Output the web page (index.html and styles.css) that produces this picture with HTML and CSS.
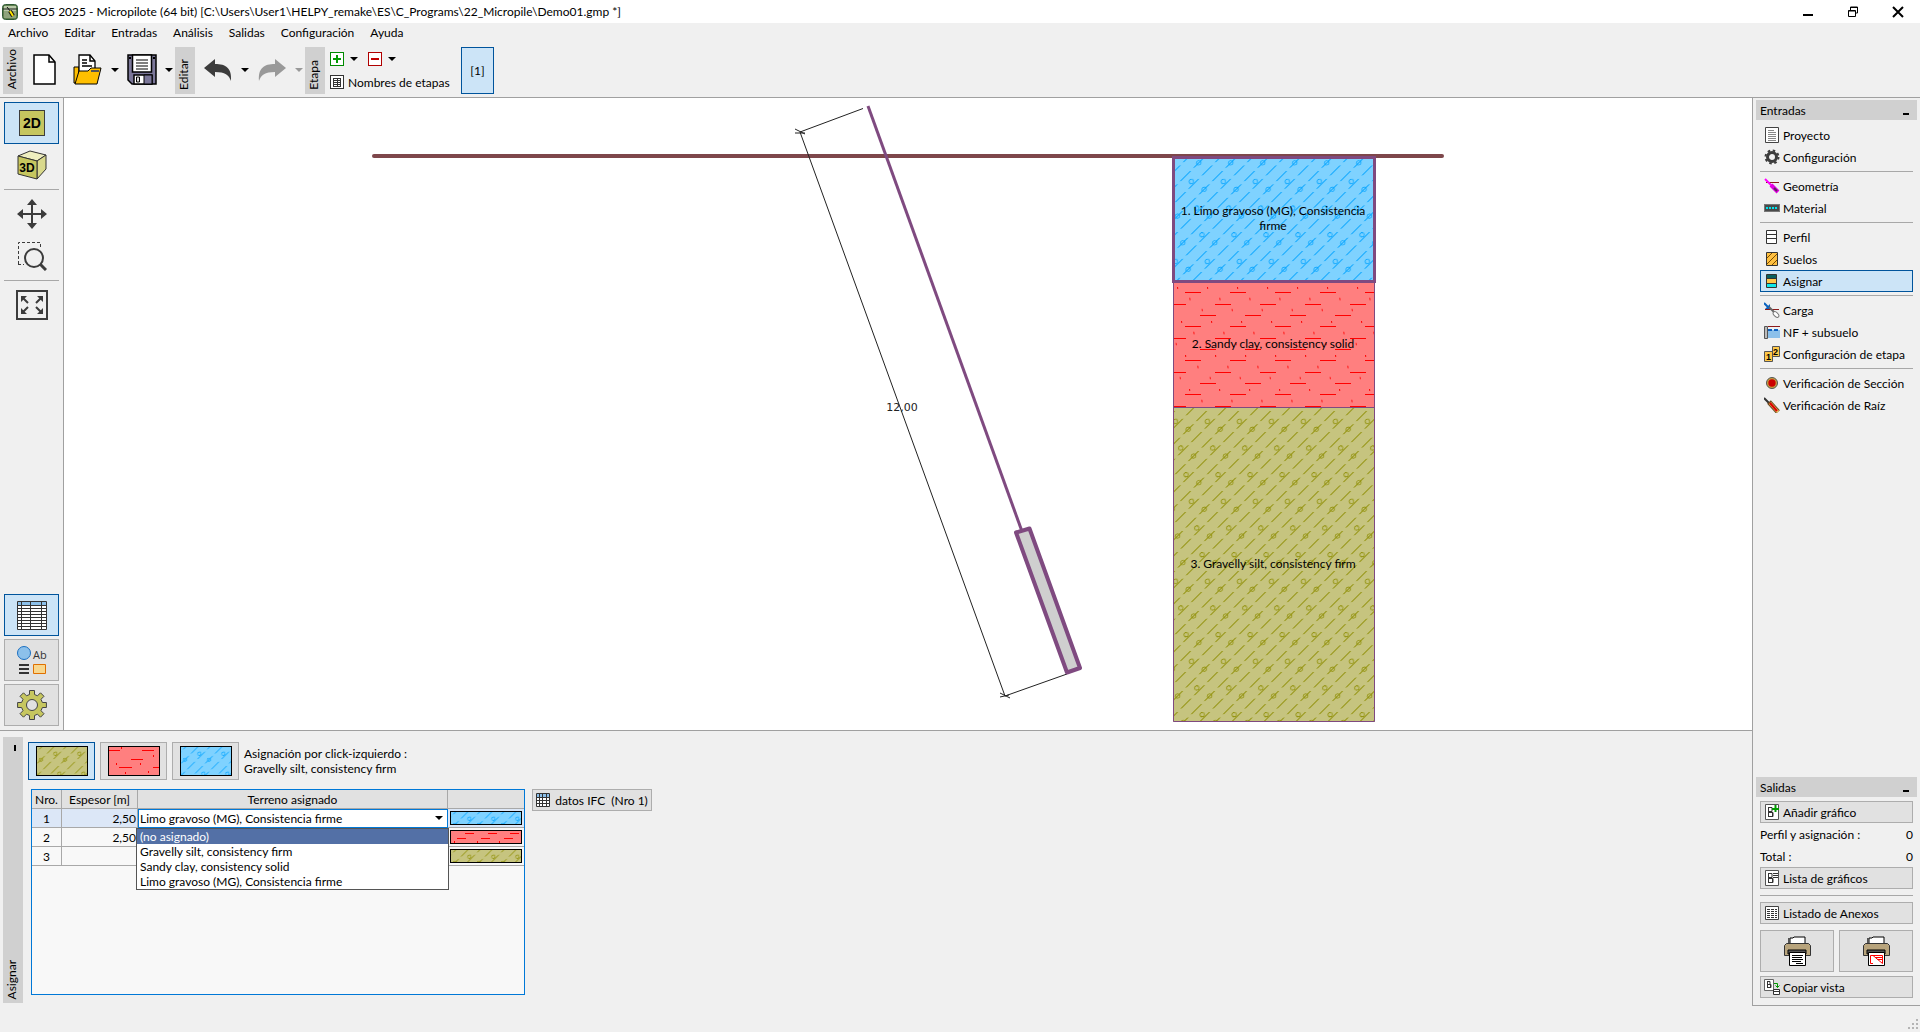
FILE: index.html
```html
<!DOCTYPE html>
<html lang="es">
<head>
<meta charset="utf-8">
<title>GEO5 2025 - Micropilote</title>
<link rel="stylesheet" href="styles.css">
</head>
<body>
<div class="app">
  <header class="titlebar">
    <svg class="app-icon" width="16" height="16" viewBox="0 0 16 16"><rect x=".5" y=".5" width="15" height="15" rx="3" fill="#5f7f4f" stroke="#2f5a35"/><rect x="2" y="2" width="12" height="5" fill="#b9c9a8"/><rect x="2" y="7" width="12" height="7" fill="#8fa47c"/><path d="M1 5h14" stroke="#222"/><path d="M5 3l4 5" stroke="#111"/><path d="M8 7l3 5" stroke="#111" stroke-width="4"/><path d="M8 7l3 5" stroke="#ffe600" stroke-width="2"/></svg>
    <h1 class="title">GEO5 2025 - Micropilote (64 bit) [C:\Users\User1\HELPY_remake\ES\C_Programs\22_Micropile\Demo01.gmp *]</h1>
    <div class="window-controls">
      <button class="win-btn" aria-label="Minimizar"><svg width="12" height="12"><path d="M1 9h10" stroke="#000" stroke-width="2"/></svg></button>
      <button class="win-btn" aria-label="Restaurar"><svg width="12" height="12" fill="none" stroke="#000"><path d="M1.500 4.500h7v6h-7zM1.500 5h7M3.500 4v-3h7v6h-2M3.500 1.500h7"/></svg></button>
      <button class="win-btn" aria-label="Cerrar"><svg width="12" height="12"><path d="M1 1l10 10M11 1L1 11" stroke="#000" stroke-width="2"/></svg></button>
    </div>
  </header>

  <nav class="menubar">
    <button>Archivo</button><button>Editar</button><button>Entradas</button><button>Análisis</button><button>Salidas</button><button>Configuración</button><button>Ayuda</button>
  </nav>

  <div class="toolbar">
    <span class="vtab"><span class="vtext">Archivo</span></span>
    <button class="tool tool-file" aria-label="Nuevo"><svg width="24" height="32" viewBox="0 0 24 32"><path d="M1 1h15l6 7v22H1z" fill="#fff" stroke="#000" stroke-width="1.500"/><path d="M16 1v7h6" fill="none" stroke="#000" stroke-width="1.500"/></svg></button>
    <button class="tool tool-open" aria-label="Abrir"><svg width="30" height="32" viewBox="0 0 30 32"><path d="M1 13h5v16H1z" fill="#ffbf00" stroke="#000"/><path d="M6 20V1h11l5 6v11z" fill="#fff" stroke="#000" stroke-width="1.300"/><path d="M17 1v6h5M9 6h5M9 9h5M9 12h10" fill="none" stroke="#000" stroke-width="1.500"/><path d="M2 30l4-13h9l3-3h10l-4 16z" fill="#ffbf00" stroke="#000"/><path d="M18 17h8" stroke="#555" stroke-width="2"/></svg></button>
    <button class="drop" aria-label="Abrir recientes"></button>
    <button class="tool tool-save" aria-label="Guardar"><svg width="30" height="32" viewBox="0 0 30 32"><path d="M1 1h28v29H5l-4-4z" fill="#7b7799" stroke="#000" stroke-width="1.500"/><path d="M5.500 1h19v17h-19z" fill="#fff" stroke="#000" stroke-width="1.500"/><path d="M9 6h12M9 9h12M9 12h12M9 15h12" stroke="#000" stroke-width="1.200"/><path d="M7 30v-9h18v9z" fill="#fff" stroke="#000" stroke-width="1.500"/><path d="M17 21h8v9h-8z" fill="#7b7799" stroke="#000"/><path d="M9.500 23h3v5h-3z" fill="#ddd" stroke="#000"/><path d="M2 4h2M26 4h2" stroke="#000" stroke-width="2"/></svg></button>
    <button class="drop" aria-label="Guardar como"></button>
    <span class="vtab"><span class="vtext">Editar</span></span>
    <button class="tool tool-undo" aria-label="Deshacer"><svg width="30" height="24" viewBox="0 0 30 24"><path d="M1 10L12 1v5c11 0 17 4 16 17-2-6-6-9-16-9v5z" fill="#3c3c3c"/></svg></button>
    <button class="drop" aria-label="Lista de deshacer"></button>
    <button class="tool tool-redo" aria-label="Rehacer" disabled><svg width="30" height="24" viewBox="0 0 30 24"><path d="M29 10L18 1v5C7 6 1 10 2 23c2-6 6-9 16-9v5z" fill="#999"/></svg></button>
    <button class="drop drop-off" aria-label="Lista de rehacer" disabled></button>
    <span class="vtab"><span class="vtext">Etapa</span></span>
    <div class="stage">
      <div class="stage-row">
        <button class="mini" aria-label="Añadir etapa"><svg width="14" height="14"><rect x=".5" y=".5" width="13" height="13" fill="#fff" stroke="#008a00"/><path d="M3 7h8M7 3v8" stroke="#009a00" stroke-width="2"/></svg></button>
        <button class="drop" aria-label="Opciones de añadir"></button>
        <button class="mini" aria-label="Eliminar etapa"><svg width="14" height="14"><rect x=".5" y=".5" width="13" height="13" fill="#fff" stroke="#b00000"/><path d="M3 7h8" stroke="#c00000" stroke-width="2"/></svg></button>
        <button class="drop" aria-label="Opciones de eliminar"></button>
      </div>
      <button class="stage-names"><svg width="14" height="14" fill="none" stroke="#333"><rect x=".5" y=".5" width="13" height="13" fill="#fff"/><path d="M3 3.500h8M3 5.500h8M3 7.500h8M3 9.500h8M3 11.500h8M3.500 3v9M7.500 3v9M10.500 3v9" stroke-width="1"/></svg>Nombres de etapas</button>
    </div>
    <button class="stage-tab">[1]</button>
  </div>

  <div class="main">
    <div class="work">
      <aside class="side">
        <button class="side-btn on" aria-label="Vista 2D"><svg width="26" height="26"><rect x=".5" y=".5" width="25" height="25" fill="#c6c65f" stroke="#3c3c3c"/><text x="13" y="18" text-anchor="middle" class="t2d">2D</text></svg></button>
        <button class="side-btn flat" aria-label="Vista 3D"><svg width="30" height="30" viewBox="0 0 30 30" stroke="#333" stroke-linejoin="round"><path d="M1 6l12-5 16 4-9 6z" fill="#eeeec0"/><path d="M20 11l9-6v14l-9 10z" fill="#d9d98c"/><path d="M1 6l19 5v18L1 24z" fill="#c6c65f"/><text x="10" y="22" text-anchor="middle" class="t3d">3D</text></svg></button>
        <hr>
        <button class="side-btn flat" aria-label="Mover"><svg width="30" height="30" viewBox="0 0 30 30"><path d="M15 4v22M4 15h22" stroke="#3c3c3c" stroke-width="2"/><path d="M15 0l5 6H10zM15 30l5-6H10zM0 15l6-5v10zM30 15l-6-5v10z" fill="#3c3c3c"/></svg></button>
        <button class="side-btn flat" aria-label="Ampliar región"><svg width="30" height="30" viewBox="0 0 30 30" fill="none" stroke="#3c3c3c"><path d="M1.500 23V1.500h22v5M1 23.500h6" stroke-dasharray="3 2"/><circle cx="17" cy="17" r="9" stroke-width="2"/><path d="M23 23l6 6" stroke-width="3"/></svg></button>
        <hr>
        <button class="side-btn flat" aria-label="Ajustar a pantalla"><svg width="32" height="30" viewBox="0 0 32 30"><rect x="1" y="1" width="30" height="28" fill="none" stroke="#3c3c3c" stroke-width="2"/><path d="M5 6h6l-6 6zM27 6h-6l6 6zM5 24h6l-6-6zM27 24h-6l6-6z" fill="#3c3c3c"/><path d="M6 7l6 6M26 7l-6 6M6 23l6-6M26 23l-6-6" stroke="#3c3c3c" stroke-width="2"/></svg></button>
        <div class="side-bottom">
          <button class="side-btn on" aria-label="Tablas"><svg width="30" height="29" viewBox="0 0 30 29"><path d="M.500.500h29v28H.500z" fill="#fff" stroke="#333"/><path d="M1 1h28v3H1z" fill="#8cc0ea"/><path d="M.500 4.500h29M.500 7.500h29M.500 10.500h29M.500 13.500h29M.500 16.500h29M.500 19.500h29M.500 22.500h29M.500 25.500h29M4.500 0v29M13.500 0v29M24.500 0v29" stroke="#333"/></svg></button>
          <button class="side-btn" aria-label="Configuración del dibujo"><svg width="30" height="28" viewBox="0 0 30 28"><circle cx="7" cy="7" r="6.500" fill="#8cc0ea" stroke="#1b6fc0"/><text x="16" y="13" class="tab">Ab</text><path d="M2 19h10M2 23h10M2 27h10" stroke="#333" stroke-width="2"/><path d="M16.500 18.500h12v9h-12z" fill="#f8d78e" stroke="#e07000"/></svg></button>
          <button class="side-btn" aria-label="Ajustes"><svg width="30" height="30" viewBox="0 0 30 30"><path d="M12.500.500h5v4l3 1.300 3-3 3.500 3.500-3 3 1.400 3.200h4v5h-4L24 20.700l3 3-3.500 3.500-3-3-3 1.300v4h-5v-4l-3-1.300-3 3L3 23.700l3-3-1.400-3.200h-4v-5h4L6 9.300l-3-3L6.500 2.800l3 3 3-1.300zM15 9.500a5.500 5.500 0 1 0 0 11 5.500 5.500 0 0 0 0-11z" fill="#c6c65f" fill-rule="evenodd" stroke="#444"/></svg></button>
        </div>
      </aside>

      <svg class="drawing" viewBox="64 98 1688 632" role="img" aria-label="Micropilote y perfil geológico">
        <defs>
          <pattern id="silt-blue" width="32" height="37.700" patternUnits="userSpaceOnUse" patternTransform="matrix(1 0 -.7071 .7071 1193 416.600)">
            <path d="M8 11v14M8 29.850v8M8 0v6.150M24 3v14M24 21.850v14" stroke="#00a2ff" stroke-width="1.200"/>
            <g transform="matrix(1 0 1 1.4142 0 0)" fill="none" stroke="#00a2ff" stroke-width=".8"><circle cx="-4.730" cy="12.730" r="2.200"/><circle cx="14.460" cy="4.740" r="2.200"/></g>
          </pattern>
          <pattern id="silt-olive" width="32" height="37.700" patternUnits="userSpaceOnUse" patternTransform="matrix(1 0 -.7071 .7071 1193 416.600)">
            <path d="M8 11v14M8 29.850v8M8 0v6.150M24 3v14M24 21.850v14" stroke="#8c8c00" stroke-width="1.200"/>
            <g transform="matrix(1 0 1 1.4142 0 0)" fill="none" stroke="#8c8c00" stroke-width=".8"><circle cx="-4.730" cy="12.730" r="2.200"/><circle cx="14.460" cy="4.740" r="2.200"/></g>
          </pattern>
          <pattern id="clay-dashes" width="45" height="34" patternUnits="userSpaceOnUse" patternTransform="translate(1185 292)">
            <path d="M0 .500h16M30 12.500h15M0 12.500h1M15 23.500h16" stroke="#f00"/>
          </pattern>
          <pattern id="clay-ticks" width="30" height="34" patternUnits="userSpaceOnUse" patternTransform="matrix(1 0 .118 1 1177 287)">
            <path d="M.500 0v2M11.500 11v2M22.500 22v2" stroke="#f00"/>
          </pattern>
          <pattern id="mini-blue" href="#silt-blue" patternTransform="matrix(.75 0 -.53 .53 32.500 4.200)"/>
          <pattern id="mini-olive" href="#silt-olive" patternTransform="matrix(.75 0 -.53 .53 32.500 4.200)"/>
          <g id="icon-doc"><path d="M1.500.500h13v15h-13z" fill="#fff" stroke="#555"/><path d="M4.500 3v10M4 3.500h4v4h-4M4 8.500h5v4h-5M8.500 8v4" fill="none" stroke="#333"/></g>
          <g id="printer"><path d="M6 9V2h3l1-1h11v8z" fill="#fff" stroke="#000"/><path d="M4 2l2 0v7H4z" fill="#555"/><path d="M.500 9.500l2-2h22l2 2v10h-26z" fill="#b8a47c" stroke="#333"/><path d="M4 14h18v4H4z" fill="#555" stroke="#000"/><path d="M5.500 16.500h16v13h-16z" fill="#fff" stroke="#000"/></g>
        </defs>
        <path d="M374 156h1068" stroke="#7e474b" stroke-width="4" stroke-linecap="round"/>
        <rect x="1173" y="282" width="202" height="125" fill="#ff7f7f"/>
        <rect x="1173" y="282" width="202" height="125" fill="url(#clay-dashes)"/>
        <rect x="1173" y="282" width="202" height="125" fill="url(#clay-ticks)"/>
        <rect x="1173" y="407" width="202" height="315" fill="#c6c47f"/>
        <rect x="1173" y="407" width="202" height="315" fill="url(#silt-olive)"/>
        <path d="M1173.500 282v439.500h201V282M1173.500 407.500h201" fill="none" stroke="#7f4a80"/>
        <rect x="1173.500" y="157.500" width="201" height="123" fill="#7fd2ff"/>
        <rect x="1173.500" y="157.500" width="201" height="124" fill="url(#silt-blue)" stroke="#7f4a80" stroke-width="3"/>
        <g fill="none" stroke="#222">
          <path d="M863 108.500l-63 23.500 205 564 62-22"/>
          <path d="M795 129l10 5M795 133h10M1000 693l10 5M1000 697l9-2"/>
        </g>
        <path d="M868 106l153.500 424" stroke="#7f4a80" stroke-width="3"/>
        <path d="M1016 532.500l13.500-4L1080 668l-13 4.500z" fill="#cfcfcf" stroke="#7f4a80" stroke-width="4" stroke-linejoin="round"/>
        <g text-anchor="middle">
          <text class="dim" x="902" y="411">12,00</text>
          <text class="label" x="1273" y="215">1. Limo gravoso (MG), Consistencia</text>
          <text class="label" x="1273" y="230">firme</text>
          <text class="label" x="1273" y="348">2. Sandy clay, consistency solid</text>
          <text class="label" x="1273" y="568">3. Gravelly silt, consistency firm</text>
        </g>
      </svg>
    </div>

    <section class="panel">
      <div class="vtab vtab-tall"><span class="vmark"></span><span class="vtext">Asignar</span></div>
      <div class="panel-body">
        <div class="swatches">
          <button class="swatch on" aria-label="Gravelly silt"><svg width="52" height="30"><rect x=".5" y=".5" width="51" height="29" fill="#c6c47f"/><rect x=".5" y=".5" width="51" height="29" fill="url(#mini-olive)" stroke="#000"/></svg></button>
          <button class="swatch" aria-label="Sandy clay"><svg width="52" height="30"><rect x=".5" y=".5" width="51" height="29" fill="#ff7f7f" stroke="#000"/><path d="M1 4.500h11M34 4.500h12M23 13.500h12M11 21.500h13M45 21.500h6M13.500 1v2M45.500 9v2M32.500 17v2M8.500 17v2M40.500 25v2M17.500 26v2" stroke="#f00"/></svg></button>
          <button class="swatch" aria-label="Limo gravoso"><svg width="52" height="30"><rect x=".5" y=".5" width="51" height="29" fill="#7fd2ff"/><rect x=".5" y=".5" width="51" height="29" fill="url(#mini-blue)" stroke="#000"/></svg></button>
          <p class="hint">Asignación por click-izquierdo :<br>Gravelly silt, consistency firm</p>
        </div>
        <div class="panel-row">
          <div class="grid-box">
            <table class="grid">
              <thead><tr><th class="c-n">Nro.</th><th class="c-e">Espesor [m]</th><th class="c-t">Terreno asignado</th><th class="c-s"></th></tr></thead>
              <tbody>
                <tr class="sel"><td class="n">1</td><td class="e">2,50</td><td class="cell-select"><select aria-label="Terreno asignado"><option>Limo gravoso (MG), Consistencia firme</option></select>
                  <ul class="popup" role="listbox" aria-label="Opciones de terreno"><li class="hot" role="option">(no asignado)</li><li role="option">Gravelly silt, consistency firm</li><li role="option">Sandy clay, consistency solid</li><li role="option">Limo gravoso (MG), Consistencia firme</li></ul></td>
                  <td><svg class="bar" width="72" height="14"><rect x=".5" y=".5" width="71" height="13" fill="#7fd2ff"/><rect x=".5" y=".5" width="71" height="13" fill="url(#mini-blue)" stroke="#000"/></svg></td></tr>
                <tr><td class="n">2</td><td class="e">2,50</td><td></td><td><svg class="bar" width="72" height="14"><rect x=".5" y=".5" width="71" height="13" fill="#ff7f7f" stroke="#000"/><path d="M15 3.500h9M38 3.500h9M60 3.500h9M7 8.500h9M31 8.500h9M54 8.500h9M4.500 11v2M27.500 11v2M49.500 11v2" stroke="#f00"/></svg></td></tr>
                <tr><td class="n">3</td><td class="e"></td><td></td><td><svg class="bar" width="72" height="14"><rect x=".5" y=".5" width="71" height="13" fill="#c6c47f"/><rect x=".5" y=".5" width="71" height="13" fill="url(#mini-olive)" stroke="#000"/></svg></td></tr>
              </tbody>
            </table>
          </div>
          <button class="ifc"><svg width="14" height="14"><path d="M.500.500h13v13H.500z" fill="#fff" stroke="#333"/><path d="M1 1h12v3H1z" fill="#8cc0ea"/><path d="M0 4.500h14M0 7.500h14M0 10.500h14M3.500 0v14M6.500 0v14M10.500 0v14" stroke="#333"/></svg><span>datos IFC &nbsp;(Nro 1)</span></button>
        </div>
      </div>
    </section>

    <aside class="right">
      <h2 class="head">Entradas<span class="fold"></span></h2>
      <div class="list">
        <button class="item"><svg width="16" height="16"><path d="M1.500.500h13v15h-13z" fill="#fff" stroke="#444"/><path d="M4 3.500h6M4 5.500h8M4 7.500h8M4 9.500h8M4 11.500h8M4 13.500h8" stroke="#888"/></svg>Proyecto</button>
        <button class="item"><svg width="16" height="16" fill="none" stroke="#3c3c3c"><circle cx="8" cy="8" r="4.500" stroke-width="3"/><circle cx="8" cy="8" r="6.500" stroke-width="2" stroke-dasharray="2.500 2.600"/></svg>Configuración</button>
        <hr>
        <button class="item"><svg width="16" height="16"><path d="M2 4.500h13" stroke="#8b1a1a"/><path d="M1 1l8 8" stroke="#f0f" stroke-width="2"/><path d="M7 7l7 7" stroke="#e000e0" stroke-width="4"/><path d="M10 10l3 3" stroke="#602060" stroke-width="2"/></svg>Geometría</button>
        <button class="item"><svg width="16" height="16"><rect x=".5" y="4.500" width="15" height="7" fill="#4a4a4a" stroke="#777"/><path d="M2 8h12" stroke="#00e5ee" stroke-width="2" stroke-dasharray="2 1"/></svg>Material</button>
        <hr>
        <button class="item"><svg width="16" height="16"><path d="M2.500 1.500h10v13h-10zM2 5.500h11M2 9.500h11" fill="#fff" stroke="#333"/></svg>Perfil</button>
        <button class="item"><svg width="16" height="16"><path d="M2.500 1.500h11v13h-11z" fill="#ffc040" stroke="#333"/><path d="M3 7l5-5M3 13L13 3M8 14l5-5" stroke="#7a4a00"/></svg>Suelos</button>
        <button class="item on"><svg width="16" height="16"><path d="M2.500 1.500h10v13h-10z" fill="#ffc848" stroke="#333"/><path d="M3 2h9v3H3z" fill="#0a6060"/><path d="M3 11h9v3H3z" fill="#10e8e8"/><path d="M2 5.500h11M2 10.500h11" stroke="#333"/></svg>Asignar</button>
        <hr>
        <button class="item"><svg width="16" height="16" fill="none"><path d="M1 7.500h14" stroke="#8b1a1a"/><path d="M0 1l5 5" stroke="#0a62c0" stroke-width="2"/><path d="M6 2v5H1z" fill="#0a62c0"/><path d="M5 5l6 6" stroke="#666" stroke-width="2"/><ellipse cx="12" cy="12.500" rx="3.500" ry="2" transform="rotate(45 12 12.500)" stroke="#777" fill="#fff"/></svg>Carga</button>
        <button class="item"><svg width="16" height="16"><path d="M4 6h12v8H4z" fill="#8cc0ea"/><path d="M4 2.500h12" stroke="#8b1a1a"/><path d="M4 6h12" stroke="#0a5fc0" stroke-width="2" stroke-dasharray="4 2"/><path d="M.500 2.500h3v12h-3z" fill="#bbb" stroke="#555"/></svg>NF + subsuelo</button>
        <button class="item"><svg width="16" height="16"><path d="M.500 5.500h8v10h-8z" fill="#ffc848" stroke="#555"/><path d="M8.500.500h7v10h-7z" fill="#ffc848" stroke="#555"/><text x="2" y="14" class="num">1</text><text x="9" y="9" class="num">2</text></svg>Configuración de etapa</button>
        <hr>
        <button class="item"><svg width="16" height="16"><circle cx="8" cy="8" r="5.500" fill="#c8a040" stroke="#555"/><circle cx="8" cy="8" r="3.700" fill="#c00"/></svg>Verificación de Sección</button>
        <button class="item"><svg width="16" height="16"><path d="M0 1l6 6" stroke="#333" stroke-width="2"/><path d="M5 5l9 10" stroke="#6b4a20" stroke-width="5"/><path d="M6 6l8 9" stroke="#e8c060" stroke-width="3"/><path d="M6 6l7 8" stroke="#d00" stroke-width="2"/></svg>Verificación de Raíz</button>
      </div>

      <div class="outputs">
        <h2 class="head">Salidas<span class="fold"></span></h2>
        <div class="out-body">
          <button class="out"><svg width="16" height="16"><use href="#icon-doc"/><path d="M8 5h7M11.500 1v7" stroke="#009a00" stroke-width="2"/></svg>Añadir gráfico</button>
          <p class="count"><span>Perfil y asignación :</span><span>0</span></p>
          <p class="count">Total :<span>0</span></p>
          <button class="out"><svg width="16" height="16"><use href="#icon-doc"/><path d="M9 3.500h5M9 5.500h5M9 7.500h5" stroke="#333"/></svg>Lista de gráficos</button>
          <hr>
          <button class="out"><svg width="16" height="16"><path d="M1.500 1.500h13v13h-13z" fill="#fff" stroke="#444"/><path d="M3 4.500h10M3 6.500h10M3 8.500h10M3 10.500h10M3 12.500h10" stroke="#333" stroke-dasharray="3 1"/></svg>Listado de Anexos</button>
          <div class="printers">
            <button class="out print" aria-label="Imprimir informe"><svg width="27" height="31"><use href="#printer"/><path d="M8 19.500h11M8 21.500h10M8 23.500h11M8 25.500h9M12 27.500h7" stroke="#000"/></svg></button>
            <button class="out print" aria-label="Imprimir vista"><svg width="27" height="31"><use href="#printer"/><path d="M10 19.500H7.500v8H10M10 19.500h9.500v8zM12 21.500h7M14.500 23.500h5" fill="none" stroke="#f00"/></svg></button>
          </div>
          <button class="out"><svg width="16" height="16"><path d="M.500.500h9v11h-9z" fill="#fff" stroke="#666"/><path d="M3.500 2v7M3 2.500h3v3h-3M3 5.500h4v3h-4M6.500 5v4" fill="none" stroke="#333"/><path d="M10 4.500h3.500v4M11.500 6.500l2 2 2-2" fill="none" stroke="#009a00"/><path d="M9.500 10.500h6v5h-6zM9 12.500h7" fill="#fff" stroke="#333"/></svg>Copiar vista</button>
        </div>
      </div>
    </aside>
  </div>

  <footer class="status"><svg width="10" height="10" fill="#b4b4b4"><path d="M8 0h2v2H8zM8 4h2v2H8zM8 8h2v2H8zM4 4h2v2H4zM4 8h2v2H4zM0 8h2v2H0z"/></svg></footer>
</div>
</body>
</html>
```
FILE: styles.css
```css
* { box-sizing: border-box; }

body {
  margin: 0;
  background: #f0f0f0;
  color: #000;
  font: 12px/15px Lato, "Open Sans", sans-serif;
}

button, select {
  margin: 0;
  padding: 0;
  border: 0;
  background: none;
  color: inherit;
  font: inherit;
}

svg { display: block; flex: none; }
h1, h2, p, ul { margin: 0; padding: 0; font-size: 12px; font-weight: 400; }

hr {
  width: 100%;
  height: 1px;
  margin: 3px 0;
  border: 0;
  background: #a8a8a8;
  flex: none;
}

.app { display: flex; flex-direction: column; min-height: 100vh; }

/* Title bar */
.titlebar { display: flex; align-items: center; height: 23px; padding: 0 16px 0 2px; background: #fff; }
.title { flex: 1; margin-left: 5px; }
.window-controls { display: flex; gap: 33px; }
.win-btn { width: 12px; height: 12px; }

/* Menu */
.menubar { display: flex; gap: 16px; height: 23px; padding: 0 8px 4px; align-items: center; }

/* Toolbar */
.toolbar { display: flex; align-items: center; height: 52px; padding: 1px 3px 4px; border-bottom: 1px solid #a0a0a0; }
.vtab { display: flex; align-items: flex-end; justify-content: center; width: 20px; height: 47px; padding: 0 3px 4px 0; background: #d0d0d0; flex: none; }
.vtext { writing-mode: vertical-rl; transform: rotate(180deg); }
.tool { flex: none; }
.tool-file { margin-left: 10px; }
.tool-open { margin-left: 16px; }
.tool-save { margin-left: 8px; }
.tool-undo { margin-left: 8px; }
.tool-redo { margin-left: 8px; }
.drop { display: flex; align-items: center; width: 8px; height: 16px; margin-left: 8px; flex: none; }
.drop::before { content: ""; display: block; border: 4px solid transparent; border-top-color: #000; border-bottom: 0; }
.drop-off::before { border-top-color: #999; }
.drop + .vtab { margin-left: 2px; }
.stage { display: flex; flex-direction: column; gap: 8px; width: 126px; margin-left: 5px; }
.stage-row { display: flex; align-items: center; height: 16px; }
.stage-row .drop { margin: 0 10px 0 6px; }
.stage-names { display: flex; align-items: center; gap: 4px; white-space: nowrap; }
.stage-tab { width: 33px; height: 47px; margin-left: 5px; border: 1px solid #00549c; background: #cce4f7; }

/* Main area */
.main { display: grid; grid-template-columns: 1fr 168px; grid-template-rows: 1fr 275px; flex: 1; }
.work { display: flex; min-height: 0; border-bottom: 1px solid #a0a0a0; }
.side { display: flex; flex-direction: column; width: 64px; padding: 4px; border-right: 1px solid #a0a0a0; flex: none; }
.side-btn { display: flex; align-items: center; justify-content: center; width: 55px; height: 42px; border: 1px solid #adadad; background: #e1e1e1; flex: none; }
.side-btn.flat { border-color: transparent; background: none; }
.on, .side-btn.on { border: 1px solid #00549c; background: #cce4f7; }
.side-bottom { display: flex; flex-direction: column; gap: 3px; margin-top: auto; }
.drawing { flex: 1; min-width: 0; width: 100%; height: 100%; background: #fff; }
.dim { font: 11px "DejaVu Sans", sans-serif; fill: #222; }
.label { font: 12px Lato, "Open Sans", sans-serif; }
.t2d { font: bold 14px "Liberation Sans", sans-serif; }
.t3d { font: bold 12px "Liberation Sans", sans-serif; stroke: none; }
.tab { font: 11px "Open Sans", sans-serif; fill: #333; }
.num { font: bold 9px "Liberation Sans", sans-serif; }

/* Assignment panel */
.panel { display: flex; gap: 5px; padding: 6px 3px 2px; }
.vtab-tall { flex-direction: column; align-items: center; justify-content: space-between; height: 266px; padding: 8px 3px 4px 0; }
.vmark { width: 2px; height: 6px; margin-left: 7px; background: #000; }
.panel-body { flex: 1; padding-top: 5px; }
.swatches { display: flex; gap: 5px; }
.swatch { display: flex; align-items: center; justify-content: center; width: 67px; height: 38px; border: 1px solid #adadad; background: #e1e1e1; }
.swatch.on { border-color: #00549c; background: #cce4f7; }
.hint { padding-top: 4px; }
.panel-row { display: flex; align-items: flex-start; gap: 7px; margin: 9px 0 0 3px; }
.grid-box { width: 494px; height: 206px; border: 1px solid #0078d7; background: #f8f8f8; }
.grid { width: 100%; border-collapse: separate; border-spacing: 0; table-layout: fixed; }
.grid th, .grid td { height: 19px; padding: 0; border-right: 1px solid #a8a8a8; border-bottom: 1px solid #a8a8a8; line-height: 15px; }
.grid th:last-child, .grid td:last-child { border-right: 0; }
.grid th { background: #e1e1e1; font-weight: 400; }
.c-n { width: 30px; }
.c-e { width: 76px; }
.c-s { width: 76px; }
.grid .n { text-align: center; }
.grid .e { padding-right: 1px; text-align: right; }
.sel td { background: #dce7f7; }
.grid .cell-select { position: relative; border: 0; }
.cell-select select { display: block; width: 100%; height: 19px; padding-left: 1px; border: 1px solid #0078d7; background: #fff; appearance: none; }
.cell-select::after { content: ""; position: absolute; top: 7px; right: 5px; border: 4px solid transparent; border-top-color: #000; border-bottom: 0; }
.popup { position: absolute; z-index: 2; top: 19px; left: -2px; right: -1px; border: 1px solid #555; background: #fff; list-style: none; }
.popup li { height: 15px; padding-left: 3px; }
.popup .hot { background: #5370a6; color: #fff; }
.bar { margin: 0 auto; }
.ifc { display: flex; align-items: center; justify-content: center; gap: 5px; width: 120px; height: 22px; border: 1px solid #adadad; background: #e1e1e1; white-space: nowrap; }

/* Right column */
.right { display: flex; flex-direction: column; grid-column: 2; grid-row: 1 / 3; padding: 2px 3px 7px; border-left: 1px solid #a0a0a0; border-bottom: 1px solid #a0a0a0; }
.head { display: flex; align-items: center; justify-content: space-between; height: 20px; padding: 0 8px 0 4px; background: #d0d0d0; }
.fold { width: 6px; height: 2px; margin-top: 7px; background: #000; }
.list { display: flex; flex-direction: column; padding: 4px; }
.item { display: flex; align-items: center; gap: 3px; height: 22px; padding: 0 3px; border: 1px solid transparent; text-align: left; white-space: nowrap; }
.item.on { border-color: #00549c; }
.outputs { margin-top: auto; }
.out-body { display: flex; flex-direction: column; padding: 4px 4px 0; }
.out { display: flex; align-items: center; gap: 3px; height: 22px; padding: 0 3px; border: 1px solid #adadad; background: #e1e1e1; text-align: left; }
.out-body hr { margin: 6px 0; }
.count { display: flex; justify-content: space-between; margin: 4px 0 3px; line-height: 15px; }
.printers { display: flex; gap: 5px; margin: 6px 0 4px; }
.print { flex: 1; justify-content: center; height: 42px; }

.status { display: flex; align-items: flex-end; justify-content: flex-end; height: 26px; padding: 3px 2px; }
```
